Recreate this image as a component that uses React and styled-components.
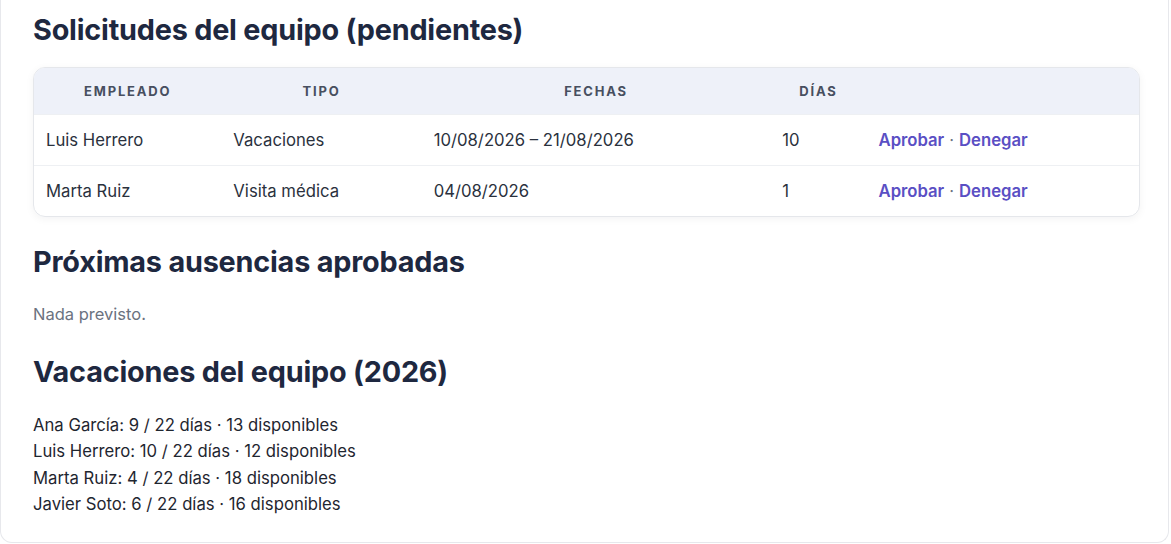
import React from "react";
import styled, { createGlobalStyle } from "styled-components";

const GlobalStyle = createGlobalStyle`
  html, body {
    margin: 0;
    padding: 0;
    background: #ffffff;
  }
  body {
    font-family: Inter, "Noto Sans", "Liberation Sans", sans-serif;
    color: #1f2937;
    -webkit-font-smoothing: antialiased;
  }
`;

const Panel = styled.div`
  width: 1169px;
  height: 543px;
  box-sizing: border-box;
  border: 1px solid #e7e8ec;
  border-top: none;
  border-radius: 0 0 12px 12px;
  padding: 12px 30px 0 32px;
  background: #fff;
`;

const SectionTitle = styled.h2`
  margin: 0 0 ${(p) => p.$gap || 20}px;
  font-size: 28.8px;
  line-height: 36px;
  font-weight: 700;
  color: #1e2840;
  letter-spacing: -0.2px;
`;

const TableCard = styled.div`
  width: 1105px;
  border: 1px solid #e5e7eb;
  border-radius: 12px;
  overflow: hidden;
  box-shadow: 0 2px 8px rgba(17, 24, 39, 0.05);
  margin-bottom: 27px;
`;

const Table = styled.table`
  width: 100%;
  border-collapse: collapse;
  table-layout: fixed;
`;

const Th = styled.th`
  box-sizing: border-box;
  width: ${(p) => p.$w}px;
  height: 46px;
  padding: 0 12px;
  background: #eef1f9;
  font-size: 13px;
  font-weight: 700;
  letter-spacing: 1.8px;
  text-transform: uppercase;
  color: #474f60;
  text-align: center;
`;

const Td = styled.td`
  height: 50px;
  padding: 0 12px;
  font-size: 16.7px;
  color: #2a313d;
  border-top: 1px solid #eef0f3;
`;

const ActionLink = styled.a`
  color: #5a4fc4;
  font-weight: 600;
  text-decoration: none;
  cursor: pointer;
`;

const Dot = styled.span`
  color: #6b7280;
  margin: 0 5px;
`;

const Muted = styled.p`
  margin: 0 0 28px;
  font-size: 16.5px;
  line-height: 24px;
  color: #6b7280;
`;

const BalanceList = styled.ul`
  list-style: none;
  margin: 0;
  padding: 0;
`;

const BalanceItem = styled.li`
  font-size: 16.7px;
  line-height: 26.5px;
  color: #1f2630;
`;

const requests = [
  { name: "Luis Herrero", type: "Vacaciones", dates: "10/08/2026 – 21/08/2026", days: 10 },
  { name: "Marta Ruiz", type: "Visita médica", dates: "04/08/2026", days: 1 },
];

const balances = [
  { name: "Ana García", used: 9, total: 22 },
  { name: "Luis Herrero", used: 10, total: 22 },
  { name: "Marta Ruiz", used: 4, total: 22 },
  { name: "Javier Soto", used: 6, total: 22 },
];

const columns = [
  { label: "Empleado", w: 187 },
  { label: "Tipo", w: 200 },
  { label: "Fechas", w: 348 },
  { label: "Días", w: 96 },
  { label: "", w: 272 },
];

const App = () => {
  return (
    <>
      <GlobalStyle />
      <Panel>
        {/* solicitudes pendientes */}
        <SectionTitle $gap={19}>Solicitudes del equipo (pendientes)</SectionTitle>
        <TableCard>
          <Table>
            <thead>
              <tr>
                {columns.map((c, i) => (
                  <Th key={i} $w={c.w}>
                    {c.label}
                  </Th>
                ))}
              </tr>
            </thead>
            <tbody>
              {requests.map((r) => (
                <tr key={r.name}>
                  <Td>{r.name}</Td>
                  <Td>{r.type}</Td>
                  <Td>{r.dates}</Td>
                  <Td>{r.days}</Td>
                  <Td>
                    <ActionLink>Aprobar</ActionLink>
                    <Dot>·</Dot>
                    <ActionLink>Denegar</ActionLink>
                  </Td>
                </tr>
              ))}
            </tbody>
          </Table>
        </TableCard>

        {/* ausencias aprobadas */}
        <SectionTitle $gap={22}>Próximas ausencias aprobadas</SectionTitle>
        <Muted>Nada previsto.</Muted>

        {/* vacaciones del equipo */}
        <SectionTitle $gap={22}>Vacaciones del equipo (2026)</SectionTitle>
        <BalanceList>
          {balances.map((b) => (
            <BalanceItem key={b.name}>
              {b.name}: {b.used} / {b.total} días · {b.total - b.used} disponibles
            </BalanceItem>
          ))}
        </BalanceList>
      </Panel>
    </>
  );
};

export default App;
